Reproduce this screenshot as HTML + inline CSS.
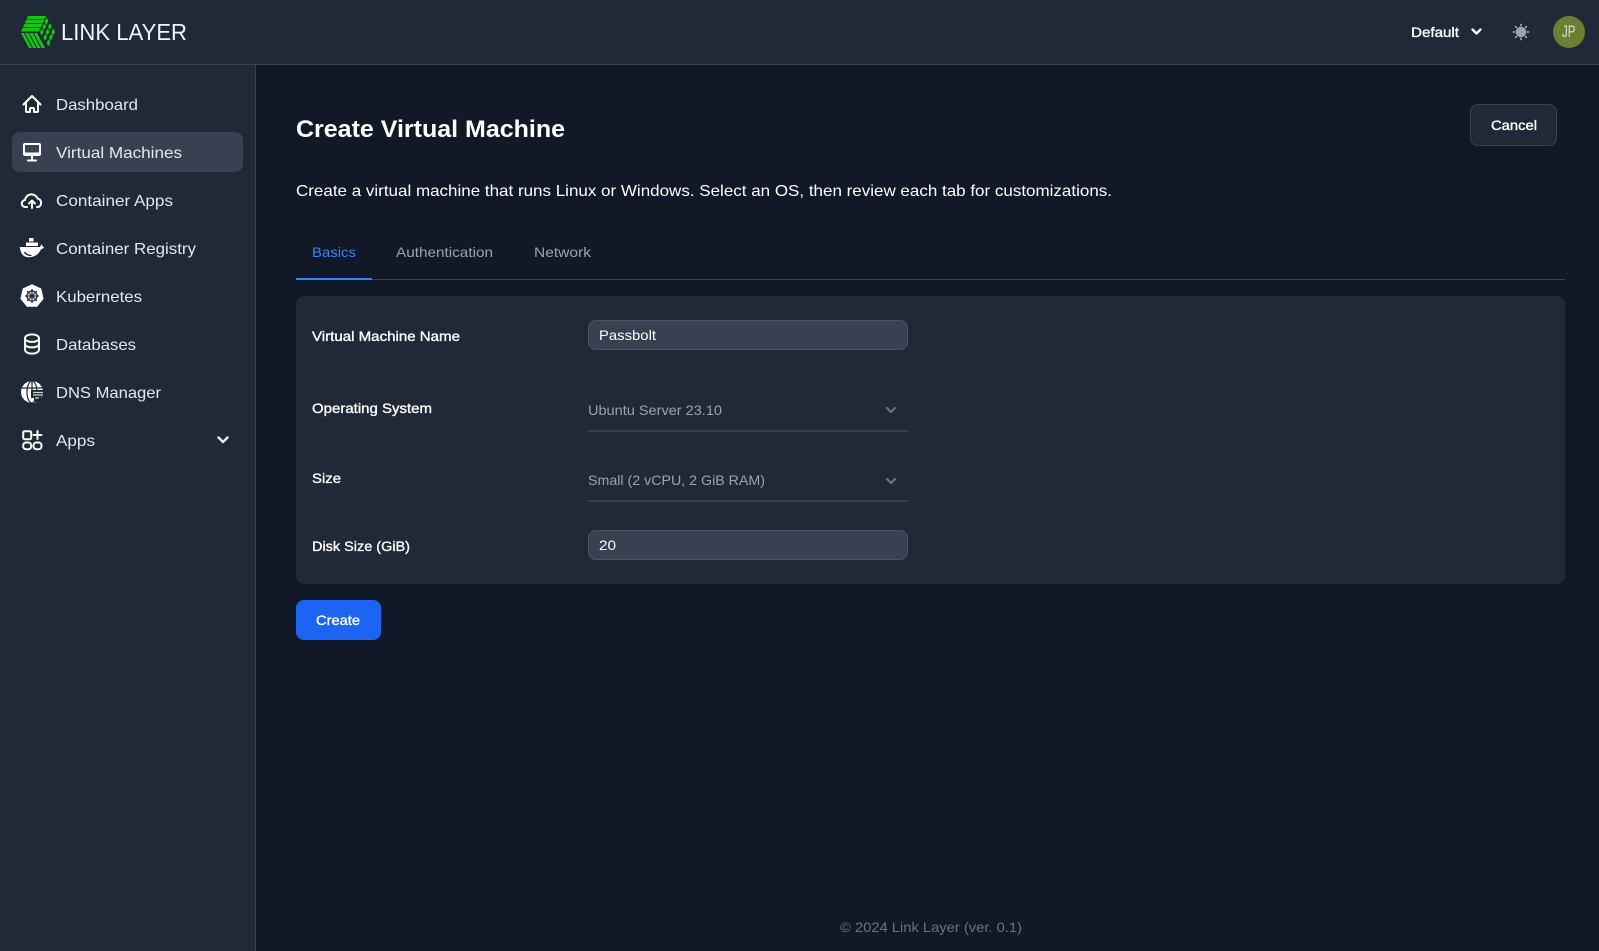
<!DOCTYPE html>
<html lang="en"><head><meta charset="utf-8"><title>Create Virtual Machine</title>
<style>
html,body{margin:0;padding:0;width:1599px;height:951px;overflow:hidden;background:#111827}
body{position:relative;font-family:"Liberation Sans",sans-serif}
.b{position:absolute;box-sizing:border-box}
svg{position:absolute;left:0;top:0}
text{font-family:"Liberation Sans",sans-serif;font-size:16px;fill:#e5e7eb}
.s{font-size:14px}
.m{font-size:14px;fill:#fff;stroke:#fff;stroke-width:.35}
.g{font-size:14px;fill:#9ca3af}
.ic{fill:none;stroke:#fff;stroke-width:2;stroke-linecap:round;stroke-linejoin:round}
</style></head><body>
<div class="b" style="left:0;top:0;width:1599px;height:65px;background:#1f2937;border-bottom:1px solid #374151"></div>
<div class="b" style="left:0;top:65px;width:256px;height:886px;background:#1f2937;border-right:1px solid #374151"></div>
<div class="b" style="left:12px;top:132px;width:231px;height:40px;background:#374151;border-radius:8px"></div>
<div class="b" style="left:1470px;top:104px;width:87px;height:42px;background:#1f2937;border:1px solid #374151;border-radius:8px"></div>
<div class="b" style="left:296px;top:279px;width:1269px;height:1px;background:#374151"></div>
<div class="b" style="left:296px;top:278px;width:76px;height:2px;background:#3b82f6"></div>
<div class="b" style="left:296px;top:296px;width:1269px;height:288px;background:#1f2937;border-radius:8px"></div>
<div class="b" style="left:588px;top:320px;width:320px;height:30px;background:#374151;border:1px solid #4b5563;border-radius:8px"></div>
<div class="b" style="left:588px;top:530px;width:320px;height:30px;background:#374151;border:1px solid #4b5563;border-radius:8px"></div>
<div class="b" style="left:588px;top:430px;width:320px;height:2px;background:#374151"></div>
<div class="b" style="left:588px;top:500px;width:320px;height:2px;background:#374151"></div>
<div class="b" style="left:296px;top:600px;width:85px;height:40px;background:#1c64f2;border-radius:8px"></div>
<div class="b" style="left:1553px;top:16px;width:32px;height:32px;background:#6c7f33;border-radius:50%"></div>

<svg width="1599" height="951" viewBox="0 0 1599 951">
<!-- logo -->
<g fill="#16c60c">
<path d="M28 16H46L44.500 19.200H26.500zM26.200 20H44.200L42.700 23.200H24.700zM24.400 24H42.400L41 27.200H23zM22.600 28H40.600L39 31.500H21z"/>
<path d="M21 33H23.800L32 48H29zM25 33H28.200L36.300 48H33.100zM29.400 33H32.600L40.700 48H37.500zM33.800 33H37L45 48H41.900z"/>
<path d="M46.840 17.730l1.580 3.600-2.260 3.600-1.580-3.600zM50.170 23.070l1.580 3.600-2.260 3.600-1.580-3.600zM53.510 28.400l1.580 3.600-2.260 3.600-1.580-3.600zM44.510 23.070l1.580 3.600-2.260 3.600-1.580-3.600zM47.840 28.400l1.580 3.600-2.260 3.600-1.580-3.600zM51.170 33.730l1.580 3.600-2.260 3.600-1.580-3.600zM42.170 28.400l1.580 3.600-2.260 3.600-1.580-3.600zM45.510 33.730l1.580 3.600-2.260 3.600-1.580-3.600zM48.840 39.070l1.580 3.600-2.260 3.600-1.580-3.600z"/>
</g>
<text x="61" y="40" textLength="126" lengthAdjust="spacingAndGlyphs" style="font-size:23.500px;fill:#f3f4f6">LINK LAYER</text>

<!-- sidebar icons -->
<g class="ic">
<path transform="translate(20 92)" d="M3.500 12.500 12 4l8.500 8.500M6 10.500V19a1 1 0 0 0 1 1h3v-3a1 1 0 0 1 1-1h2a1 1 0 0 1 1 1v3h3a1 1 0 0 0 1-1v-8.500"/>
<rect x="24" y="144" width="16" height="11" rx="1"/>
<path d="M32 156v4M28 160.500h8"/>
<path d="M27 207h-1.500a3.500 3.500 0 0 1-.5-7 6.500 6.500 0 0 1 12.500-1.500 4.500 4.500 0 0 1 1 8.500H37M32 208v-7M29 203.500l3-3 3 3"/>
<path d="M25 338.500c0-5.500 14-5.500 14 0v11c0 5.500-14 5.500-14 0zM25 338.500c0 4.500 14 4.500 14 0M25 344c0 4.500 14 4.500 14 0"/>
<rect x="23.200" y="431.200" width="8" height="8" rx="1.500"/>
<rect x="23.200" y="442.500" width="8" height="6.800" rx="3"/>
<rect x="33.500" y="442.500" width="8" height="6.800" rx="3"/>
<path d="M33.500 435h8M37.500 431v8"/>
</g>
<rect x="24" y="152.500" width="16" height="2.500" fill="#fff"/>
<!-- docker -->
<g fill="#fff">
<path d="M29 238h4.500v3.500H29zM26 242.500h12v3.500H26z"/>
<path d="M20.500 247h19.500c.6-.8 1-1.700 1-2.600 1 .5 1.600 1.300 1.700 2.400.5 0 .9.100 1.300.4-.8 1.300-1.800 1.800-3 2-2 5-6.500 8-12.300 8-5.500 0-8-3.500-9-10.200z"/>
</g>
<path d="M24.500 252c1.500 2.500 4 3.500 7 3.500" fill="none" stroke="#1f2937" stroke-width="1.300"/>
<!-- kubernetes -->
<path d="M32 285l8.600 4.100 2.200 9.400-6 7.500H27.200l-6-7.500 2.200-9.400z" fill="#fff" stroke="#fff" stroke-width="1.500" stroke-linejoin="round"/>
<g fill="none" stroke="#1f2937" stroke-width="1.200"><circle cx="32" cy="296" r="5"/><circle cx="32" cy="296" r="1.300" fill="#1f2937"/><path d="M32 289v14M25 296h14M27 291l10 10M37 291l-10 10"/></g>
<!-- globe -->
<circle cx="32" cy="392" r="11" fill="#fff"/>
<g fill="none" stroke="#1f2937" stroke-width="1.200"><ellipse cx="32" cy="392" rx="5" ry="11"/><path d="M32 381v11M21.500 388h21"/></g>
<path d="M31 390h13v7h-3v5h-7v-4h-3z" fill="#1f2937"/>
<path d="M33 392.500h10M33 395h10M35 398h4" stroke="#d1d5db" stroke-width="1.300"/>
<path d="M218.500 437.500l4.500 4.500 4.500-4.500" fill="none" stroke="#e5e7eb" stroke-width="2.500" stroke-linecap="round" stroke-linejoin="round"/>

<!-- sidebar text -->
<text x="56" y="110" textLength="82" lengthAdjust="spacingAndGlyphs">Dashboard</text>
<text x="56" y="158" textLength="126" lengthAdjust="spacingAndGlyphs">Virtual Machines</text>
<text x="56" y="206" textLength="117" lengthAdjust="spacingAndGlyphs">Container Apps</text>
<text x="56" y="254" textLength="140" lengthAdjust="spacingAndGlyphs">Container Registry</text>
<text x="56" y="302" textLength="86" lengthAdjust="spacingAndGlyphs">Kubernetes</text>
<text x="56" y="350" textLength="80" lengthAdjust="spacingAndGlyphs">Databases</text>
<text x="56" y="398" textLength="105" lengthAdjust="spacingAndGlyphs">DNS Manager</text>
<text x="56" y="446" textLength="39" lengthAdjust="spacingAndGlyphs">Apps</text>

<!-- header right -->
<text class="m" x="1411" y="37" textLength="48" lengthAdjust="spacingAndGlyphs">Default</text>
<path d="M1472.500 29.500l4 4 4-4" fill="none" stroke="#fff" stroke-width="2.300" stroke-linecap="round" stroke-linejoin="round"/>
<circle cx="1521" cy="32" r="5.300" fill="#9ca3af"/>
<path d="M1521 24.500v1M1521 38.500v1M1513.500 32h1M1527.500 32h1M1515.700 26.700l.6.6M1525.700 36.700l.6.6M1526.300 26.700l-.6.6M1516.300 36.700l-.6.6" stroke="#9ca3af" stroke-width="1.800" stroke-linecap="round"/>
<text x="1562" y="37" textLength="13.500" lengthAdjust="spacingAndGlyphs" style="font-size:17px;fill:#d9dfcb">JP</text>

<!-- main -->
<text x="296" y="137" textLength="269" lengthAdjust="spacingAndGlyphs" style="font-size:24px;font-weight:700;fill:#fff">Create Virtual Machine</text>
<text class="m" x="1491" y="130" textLength="46" lengthAdjust="spacingAndGlyphs">Cancel</text>
<text x="296" y="196" textLength="816" lengthAdjust="spacingAndGlyphs" style="fill:#fff">Create a virtual machine that runs Linux or Windows. Select an OS, then review each tab for customizations.</text>
<text class="s" x="312" y="257" textLength="44" lengthAdjust="spacingAndGlyphs" style="fill:#3b82f6">Basics</text>
<text class="g" x="396" y="257" textLength="97" lengthAdjust="spacingAndGlyphs">Authentication</text>
<text class="g" x="534" y="257" textLength="57" lengthAdjust="spacingAndGlyphs">Network</text>

<text class="m" x="312" y="341" textLength="148" lengthAdjust="spacingAndGlyphs">Virtual Machine Name</text>
<text class="m" x="312" y="413" textLength="120" lengthAdjust="spacingAndGlyphs">Operating System</text>
<text class="m" x="312" y="483" textLength="29" lengthAdjust="spacingAndGlyphs">Size</text>
<text class="m" x="312" y="551" textLength="98" lengthAdjust="spacingAndGlyphs">Disk Size (GiB)</text>

<text class="s" x="599" y="340" textLength="57" lengthAdjust="spacingAndGlyphs" style="fill:#fff">Passbolt</text>
<text class="g" x="588" y="415" textLength="134" lengthAdjust="spacingAndGlyphs">Ubuntu Server 23.10</text>
<path d="M887 408l4 4 4-4" fill="none" stroke="#6b7280" stroke-width="2.200" stroke-linecap="round" stroke-linejoin="round"/>
<text class="g" x="588" y="485" textLength="177" lengthAdjust="spacingAndGlyphs">Small (2 vCPU, 2 GiB RAM)</text>
<path d="M887 479l4 4 4-4" fill="none" stroke="#6b7280" stroke-width="2.200" stroke-linecap="round" stroke-linejoin="round"/>
<text class="s" x="599" y="550" textLength="17" lengthAdjust="spacingAndGlyphs" style="fill:#fff">20</text>
<text class="m" x="316" y="625" textLength="44" lengthAdjust="spacingAndGlyphs">Create</text>
<text x="840" y="932" textLength="182" lengthAdjust="spacingAndGlyphs" style="font-size:14px;fill:#6b7280">© 2024 Link Layer (ver. 0.1)</text>
</svg>
</body></html>
